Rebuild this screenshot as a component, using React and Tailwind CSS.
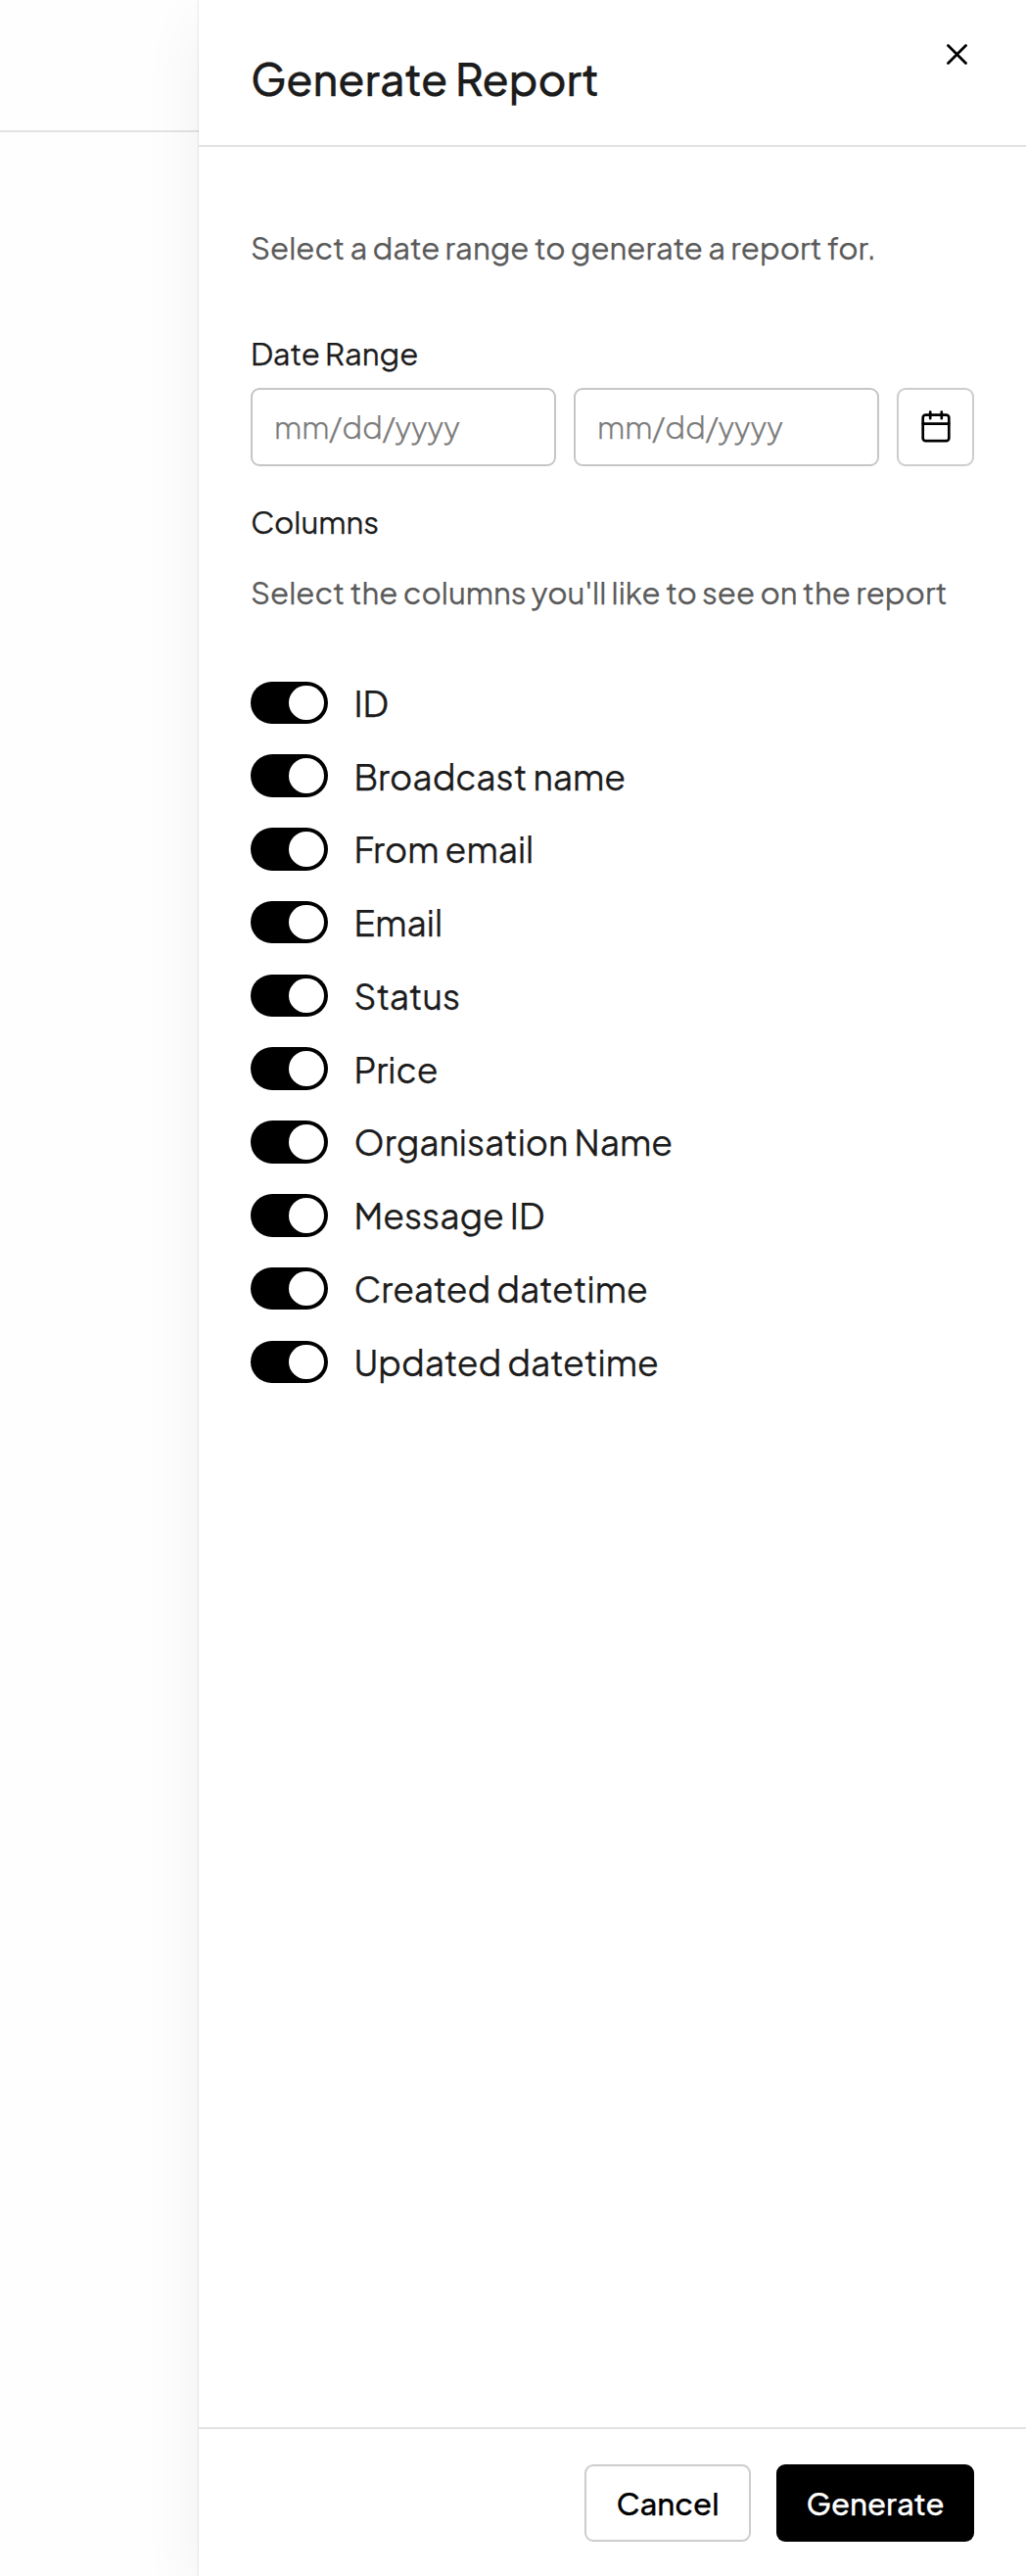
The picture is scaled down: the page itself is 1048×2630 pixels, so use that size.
import { useState } from "react";

const COLUMNS = [
  "ID",
  "Broadcast name",
  "From email",
  "Email",
  "Status",
  "Price",
  "Organisation Name",
  "Message ID",
  "Created datetime",
  "Updated datetime",
];

const Toggle = ({ label }) => {
  const [on, setOn] = useState(true);

  return (
    <label className="flex h-[43.6px] items-center gap-[26.5px]">
      <button
        role="switch"
        aria-checked={on}
        onClick={() => setOn(!on)}
        className={`flex h-[43.6px] w-[79px] shrink-0 items-center rounded-full px-1 ${
          on ? "justify-end bg-black" : "justify-start bg-[#c8c8c8]"
        }`}
      >
        <span className="size-[35.6px] rounded-full bg-white" />
      </button>
      <span className="text-[35.5px] leading-[43px] whitespace-nowrap">{label}</span>
    </label>
  );
};

const DateInput = () => (
  <input
    type="text"
    placeholder="mm/dd/yyyy"
    className="h-20 w-[312px] rounded-[9px] border-2 border-[#c6c6c6] bg-white px-[22px] pb-0.5 text-[31px] font-light placeholder:text-[#7b7b7b]"
  />
);

const App = () => {
  return (
    <div className="flex h-[2630px] w-[1048px] overflow-hidden bg-[#fefefe] font-['Plus_Jakarta_Sans',Inter,sans-serif] text-[#1c1c1c] [-webkit-text-stroke:0.25px]">
      {/* Page behind the drawer */}
      <div className="h-[135px] w-[203px] shrink-0 border-b-2 border-[#e3e3e3]" />

      {/* Drawer */}
      <div className="relative flex flex-1 flex-col bg-white shadow-[0_22px_60px_rgba(0,0,0,0.06),0_0_2px_rgba(0,0,0,0.2)]">
        <div className="flex h-[150px] items-start justify-between border-b-2 border-[#e3e3e3] pr-[60px] pl-[53px]">
          <h1 className="mt-[52px] text-[44.4px] leading-[56px] font-medium">
            Generate Report
          </h1>
          <button aria-label="Close" className="mt-[45px]">
            <svg width="21" height="21" viewBox="0 0 21 21" fill="none">
              <path
                d="M1.5 1.5 19.5 19.5M19.5 1.5 1.5 19.5"
                stroke="#000"
                strokeWidth="2.8"
                strokeLinecap="round"
              />
            </svg>
          </button>
        </div>

        <div className="flex flex-1 flex-col px-[53px]">
          <p className="mt-[83px] text-[31.1px] leading-10 whitespace-nowrap text-[#5a5a5a]">
            Select a date range to generate a report for.
          </p>

          <p className="mt-[68px] text-[31.1px] leading-10">Date Range</p>
          <div className="mt-[15px] flex gap-[18px]">
            <DateInput />
            <DateInput />
            <button
              aria-label="Pick dates"
              className="flex h-20 w-[79px] items-center justify-center rounded-[9px] border-2 border-[#cdcdcd]"
            >
              <svg
                width="30"
                height="33"
                viewBox="0 0 30 33"
                fill="none"
                stroke="#000"
                strokeWidth="2.7"
                className="-mt-0.5"
              >
                <rect x="1.7" y="4.6" width="26.6" height="26.6" rx="2.8" />
                <path d="M1.7 13.6h26.6M9.2 1.6v6.6M20.8 1.6v6.6" strokeLinecap="round" />
              </svg>
            </button>
          </div>

          <p className="mt-[37px] text-[31.1px] leading-10">Columns</p>
          <p className="mt-8 text-[31.1px] leading-10 whitespace-nowrap text-[#5a5a5a]">
            Select the columns you'll like to see on the report
          </p>

          <div className="mt-[70.5px] flex flex-col gap-[31.2px]">
            {COLUMNS.map((label) => (
              <Toggle key={label} label={label} />
            ))}
          </div>
        </div>

        {/* Footer actions */}
        <div className="flex h-[152px] items-start justify-end gap-[26px] border-t-2 border-[#e3e3e3] pt-9 pr-[53px]">
          <button className="h-[79px] w-[170px] rounded-[9px] border-2 border-[#cdcdcd] pt-0.5 text-[31.1px] font-medium text-black">
            Cancel
          </button>
          <button className="h-[79px] w-[202px] rounded-[9px] bg-black pt-0.5 text-[31.1px] font-medium text-white">
            Generate
          </button>
        </div>
      </div>
    </div>
  );
};

export default App;
